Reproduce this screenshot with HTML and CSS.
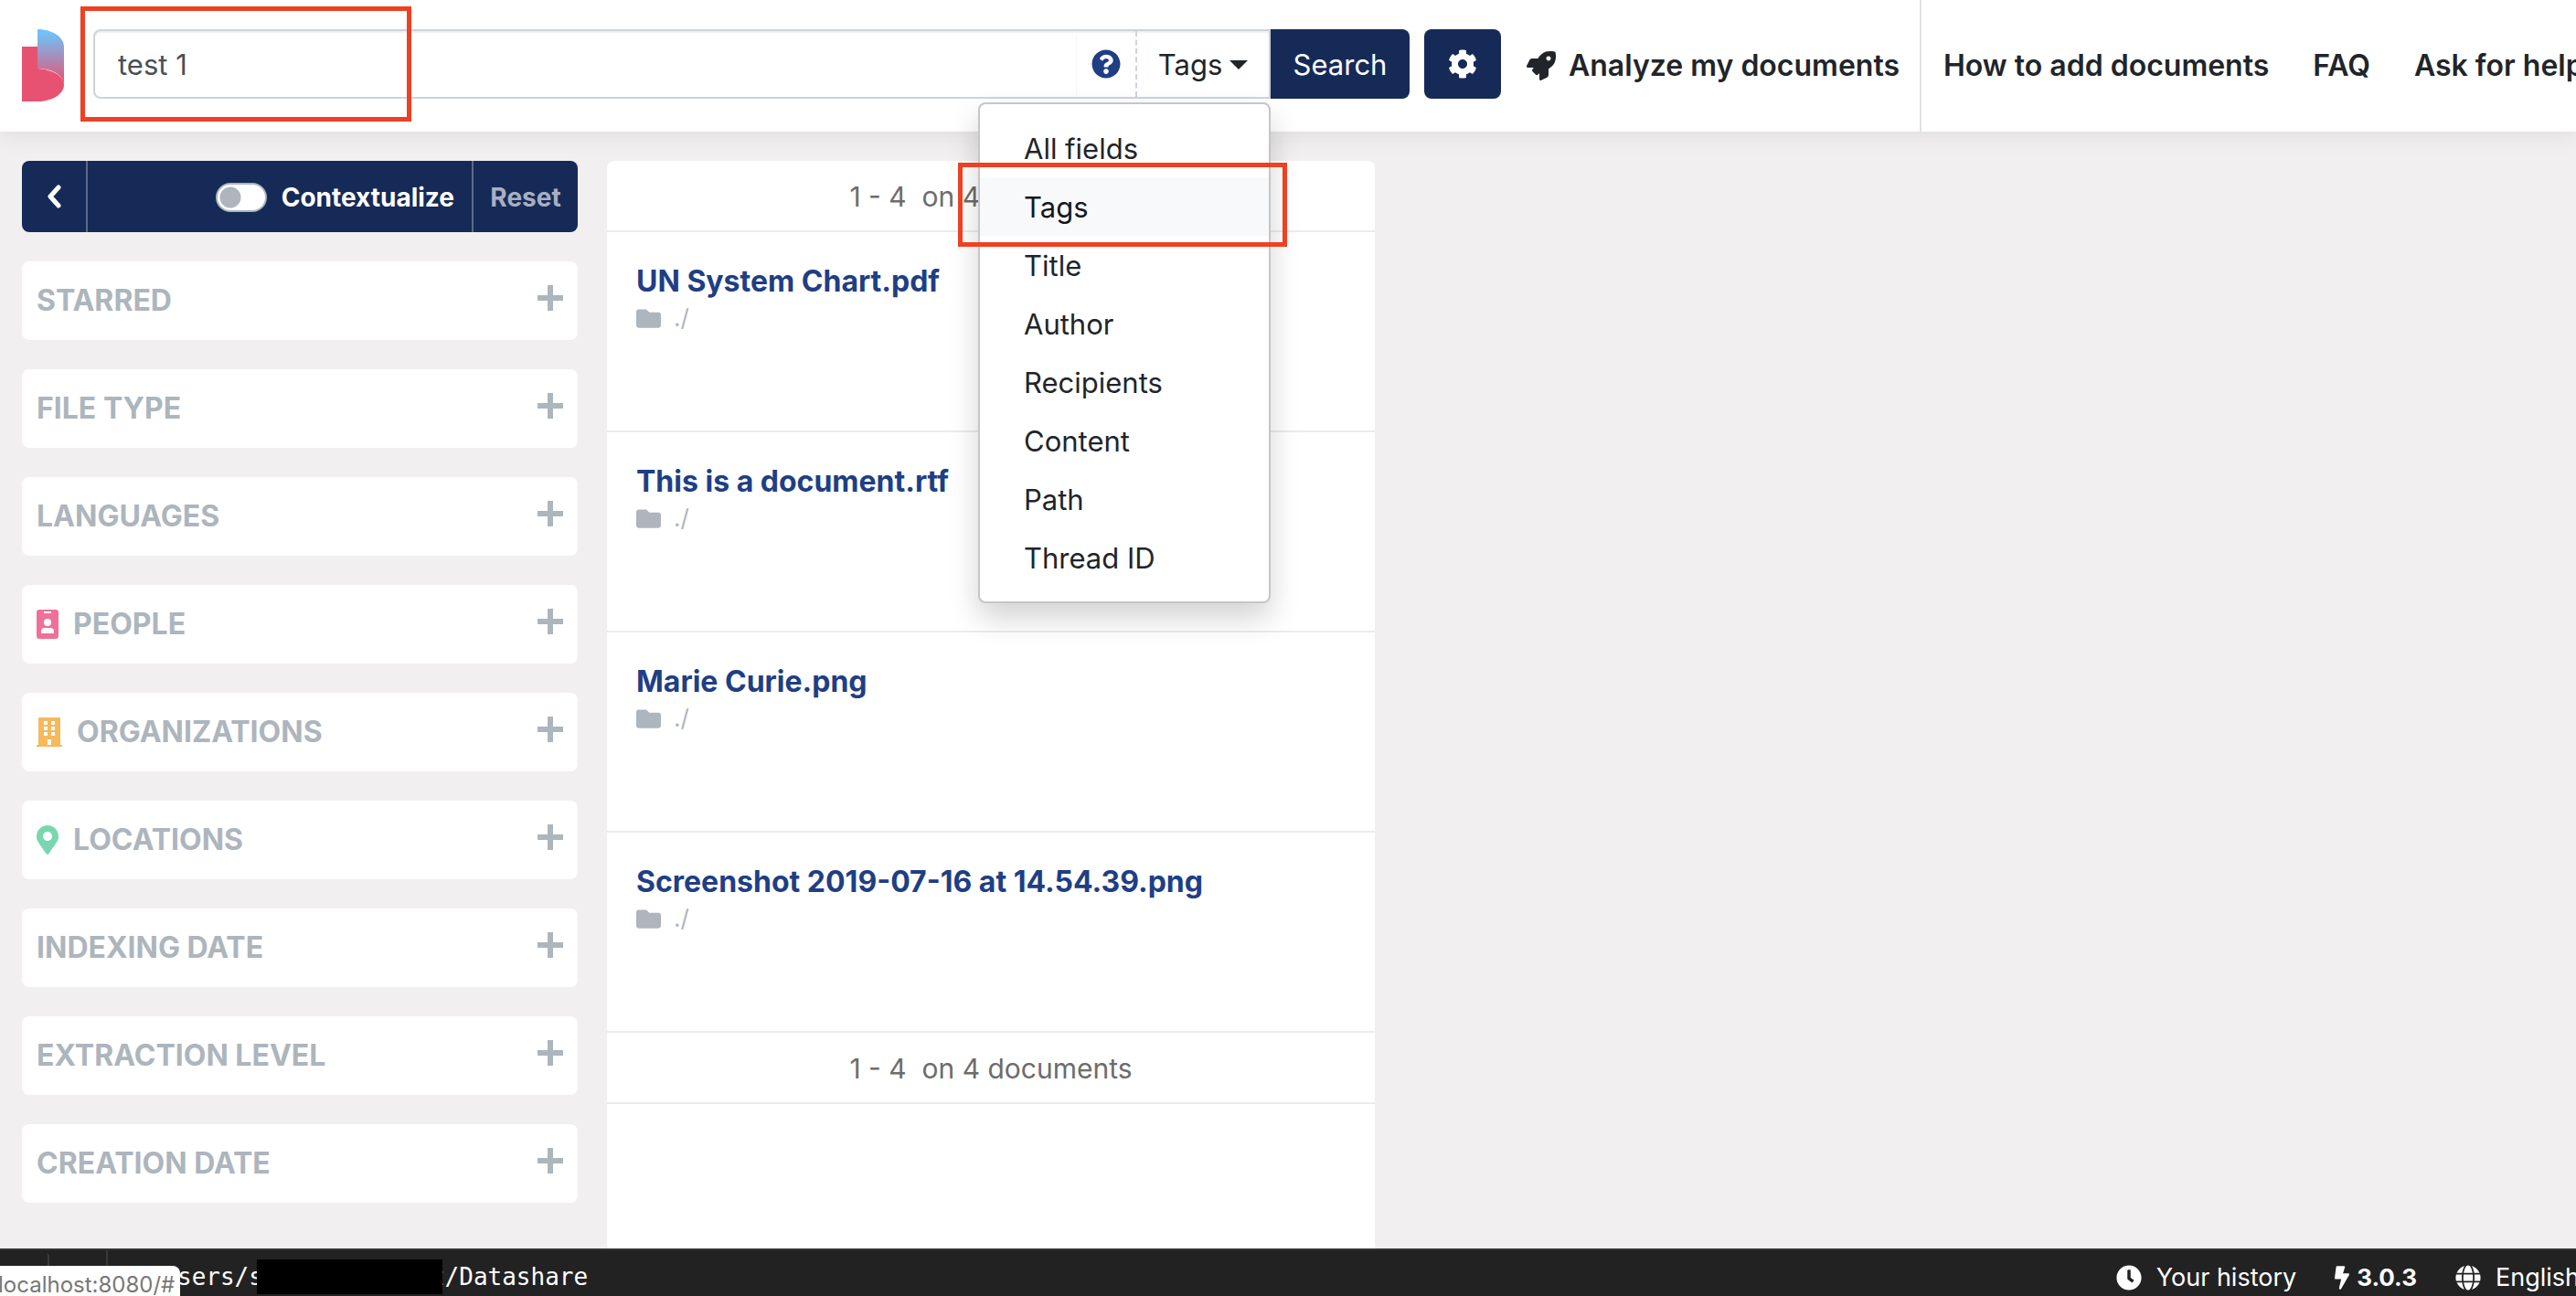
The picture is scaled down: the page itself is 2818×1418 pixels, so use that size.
FILE: index.html
```html
<!DOCTYPE html>
<html lang="en">
<head>
<meta charset="utf-8">
<title>Datashare</title>
<link rel="stylesheet" href="styles.css">
</head>
<body>
<header class="topbar">
  <a class="logo" href="#" aria-label="Datashare home">
    <svg width="46" height="79" viewBox="0 0 46 79">
      <defs><linearGradient id="fade" x1="0" y1="0" x2="0" y2="1"><stop offset="0.05" stop-color="#6cc4fb"/><stop offset="1" stop-color="#e85272"/></linearGradient></defs>
      <path fill="#e85272" d="M0 19H17V43C32 44 46 50 46 61C46 71 33 79 17 79H0Z"/>
      <path fill="url(#fade)" d="M17 0C34 0 46 9 46 19V60C45 50 33 43 17 43Z"/>
    </svg>
  </a>
  <form class="search" role="search">
    <div class="search-box">
      <input class="search-input" type="text" value="test 1" aria-label="Search documents">
      <button class="search-help" type="button" aria-label="Search help"><svg width="32" height="32" viewBox="0 0 512 512" fill="currentColor"><path d="M504 256c0 136.997-111.043 248-248 248S8 392.997 8 256C8 119.083 119.043 8 256 8s248 111.083 248 248zM262.655 90c-54.497 0-89.255 22.957-116.549 63.758-3.536 5.286-2.353 12.415 2.715 16.258l34.699 26.31c5.205 3.947 12.621 3.008 16.665-2.122 17.864-22.658 30.113-35.797 57.303-35.797 20.429 0 45.698 13.148 45.698 32.958 0 14.976-12.363 22.667-32.534 33.976C247.128 238.528 216 254.941 216 296v4c0 6.627 5.373 12 12 12h56c6.627 0 12-5.373 12-12v-1.333c0-28.462 83.186-29.647 83.186-106.667 0-58.002-60.165-102-116.531-102zM256 338c-25.365 0-46 20.635-46 46 0 25.364 20.635 46 46 46s46-20.636 46-46c0-25.365-20.635-46-46-46z"/></svg></button>
      <button class="field-toggle" type="button" aria-haspopup="true" aria-expanded="true">Tags<span class="caret"></span></button>
      <div class="field-menu">
        <a class="field-item" href="#">All fields</a>
        <a class="field-item field-item-active" href="#">Tags<span class="mark mark-item"></span></a>
        <a class="field-item" href="#">Title</a>
        <a class="field-item" href="#">Author</a>
        <a class="field-item" href="#">Recipients</a>
        <a class="field-item" href="#">Content</a>
        <a class="field-item" href="#">Path</a>
        <a class="field-item" href="#">Thread ID</a>
      </div>
    </div>
    <button class="search-submit" type="submit">Search</button>
  </form>
  <button class="settings" type="button" aria-label="Settings"><svg width="32" height="32" viewBox="0 0 512 512" fill="currentColor"><path d="M487.4 315.7l-42.6-24.6c4.3-23.2 4.3-47 0-70.2l42.6-24.6c4.9-2.8 7.1-8.6 5.5-14-11.1-35.6-30-67.8-54.7-94.6-3.8-4.1-10-5.1-14.8-2.3L380.8 110c-17.9-15.4-38.5-27.3-60.8-35.1V25.8c0-5.6-3.9-10.5-9.4-11.7-36.7-8.2-74.3-7.8-109.2 0-5.5 1.2-9.4 6.1-9.4 11.7V75c-22.2 7.9-42.8 19.8-60.8 35.1L88.7 85.5c-4.9-2.8-11-1.9-14.8 2.3-24.7 26.7-43.6 58.9-54.7 94.6-1.7 5.4.6 11.2 5.5 14L67.3 221c-4.3 23.2-4.3 47 0 70.2l-42.6 24.6c-4.9 2.8-7.1 8.6-5.5 14 11.1 35.6 30 67.8 54.7 94.6 3.8 4.1 10 5.1 14.8 2.3l42.6-24.6c17.9 15.4 38.5 27.3 60.8 35.1v49.2c0 5.6 3.9 10.5 9.4 11.7 36.7 8.2 74.3 7.8 109.2 0 5.5-1.2 9.4-6.1 9.4-11.7v-49.2c22.2-7.9 42.8-19.8 60.8-35.1l42.6 24.6c4.9 2.8 11 1.9 14.8-2.3 24.7-26.7 43.6-58.9 54.7-94.6 1.5-5.5-.7-11.3-5.6-14.1zM256 336c-44.1 0-80-35.9-80-80s35.9-80 80-80 80 35.9 80 80-35.9 80-80 80z"/></svg></button>
  <a class="analyze" href="#"><svg width="32" height="32" viewBox="0 0 512 512" fill="currentColor"><path d="M505.12 19.09c-1.19-5.53-6.66-11-12.21-12.19C460.72 0 435.51 0 410.41 0 307.18 0 245.27 55.2 199.05 128H94.84c-16.35 0-35.56 11.88-42.89 26.48L2.52 253.3A28.4 28.4 0 0 0 0 264a24 24 0 0 0 24 24h103.82l-22.48 22.47c-11.36 11.36-13 32.26 0 45.25l50.91 50.9c11.15 11.2 32.15 13.17 45.27 0L224 384.16V488a24 24 0 0 0 24 24 28.56 28.56 0 0 0 10.7-2.52l98.73-49.39c14.63-7.29 26.51-26.5 26.51-42.85V312.8c72.6-46.32 128.04-108.41 128.04-211.1C512.08 76.5 512.08 51.3 505.12 19.09ZM384.04 168A40 40 0 1 1 424.05 128 40.02 40.02 0 0 1 384.04 168Z"/></svg>Analyze my documents</a>
  <nav class="help-links">
    <a href="#">How to add documents</a>
    <a href="#">FAQ</a>
    <a class="clipped" href="#">Ask for help</a>
  </nav>
  <span class="mark mark-query"></span>
</header>

<main class="content">
  <aside class="filters">
    <div class="filters-bar">
      <button class="bar-back" type="button" aria-label="Hide filters"><svg width="16" height="26" viewBox="0 0 16 26" fill="none" stroke="currentColor" stroke-width="5" stroke-linecap="round" stroke-linejoin="round"><path d="M13 3L4 13L13 23"/></svg></button>
      <label class="bar-context" for="ctx"><input class="switch" type="checkbox" id="ctx">Contextualize</label>
      <button class="bar-reset" type="button">Reset</button>
    </div>
    <button class="filter" type="button"><span>STARRED</span><i class="plus"></i></button>
    <button class="filter" type="button"><span>FILE TYPE</span><i class="plus"></i></button>
    <button class="filter" type="button"><span>LANGUAGES</span><i class="plus"></i></button>
    <button class="filter" type="button"><svg width="24" height="32" viewBox="0 0 24 32"><rect width="24" height="32" rx="3" fill="#ef7099"/><g fill="#fff"><rect x="8" y="2" width="8" height="2"/><circle cx="12" cy="14" r="4"/><path d="M5 26v-2a4 4 0 0 1 4-4h6a4 4 0 0 1 4 4v1q0 1-1 1H6q-1 0-1-1z"/></g></svg><span>PEOPLE</span><i class="plus"></i></button>
    <button class="filter" type="button"><svg width="28" height="32" viewBox="0 0 28 32"><path fill="#f6b95b" d="M2 30V1q0-1 1-1H25q1 0 1 1V30h2v2H0V30z"/><path fill="#fff" d="M8 4h4v4H8zM16 4h4v4h-4zM8 10h4v4H8zM16 10h4v4h-4zM8 16h4v4H8zM16 16h4v4h-4zM12 24h4v6h-4z"/></svg><span>ORGANIZATIONS</span><i class="plus"></i></button>
    <button class="filter" type="button"><svg width="24" height="32" viewBox="0 0 384 512"><path fill="#78d7b0" d="M172.268 501.67C26.97 291.031 0 269.413 0 192 0 85.961 85.961 0 192 0s192 85.961 192 192c0 77.413-26.97 99.031-172.268 309.67-9.535 13.774-29.93 13.773-39.464 0zM192 272c44.183 0 80-35.817 80-80s-35.817-80-80-80-80 35.817-80 80 35.817 80 80 80z"/></svg><span>LOCATIONS</span><i class="plus"></i></button>
    <button class="filter" type="button"><span>INDEXING DATE</span><i class="plus"></i></button>
    <button class="filter" type="button"><span>EXTRACTION LEVEL</span><i class="plus"></i></button>
    <button class="filter" type="button"><span>CREATION DATE</span><i class="plus"></i></button>
  </aside>

  <section class="results">
    <div class="count">1 - 4&nbsp; on 4 documents</div>
    <article class="doc"><a class="doc-title" href="#">UN System Chart.pdf</a><div class="doc-path"><svg width="27" height="27" viewBox="0 0 512 512" fill="currentColor"><path d="M464 128H272l-64-64H48C21.49 64 0 85.49 0 112v288c0 26.51 21.49 48 48 48h416c26.51 0 48-21.49 48-48V176c0-26.51-21.49-48-48-48z"/></svg>./</div></article>
    <article class="doc"><a class="doc-title" href="#">This is a document.rtf</a><div class="doc-path"><svg width="27" height="27" viewBox="0 0 512 512" fill="currentColor"><path d="M464 128H272l-64-64H48C21.49 64 0 85.49 0 112v288c0 26.51 21.49 48 48 48h416c26.51 0 48-21.49 48-48V176c0-26.51-21.49-48-48-48z"/></svg>./</div></article>
    <article class="doc"><a class="doc-title" href="#">Marie Curie.png</a><div class="doc-path"><svg width="27" height="27" viewBox="0 0 512 512" fill="currentColor"><path d="M464 128H272l-64-64H48C21.49 64 0 85.49 0 112v288c0 26.51 21.49 48 48 48h416c26.51 0 48-21.49 48-48V176c0-26.51-21.49-48-48-48z"/></svg>./</div></article>
    <article class="doc"><a class="doc-title" href="#">Screenshot 2019-07-16 at 14.54.39.png</a><div class="doc-path"><svg width="27" height="27" viewBox="0 0 512 512" fill="currentColor"><path d="M464 128H272l-64-64H48C21.49 64 0 85.49 0 112v288c0 26.51 21.49 48 48 48h416c26.51 0 48-21.49 48-48V176c0-26.51-21.49-48-48-48z"/></svg>./</div></article>
    <div class="count">1 - 4&nbsp; on 4 documents</div>
  </section>
</main>

<footer class="footer">
  <div class="footer-slot footer-slot-first"></div>
  <div class="footer-slot"></div>
  <div class="data-path"><span>sers/s</span><span class="redacted"></span><span>t/Datashare</span></div>
  <div class="footer-links">
    <a href="#"><svg width="28" height="28" viewBox="0 0 512 512" fill="currentColor"><path d="M256,8C119,8,8,119,8,256S119,504,256,504,504,393,504,256,393,8,256,8Zm92.49,313h0l-20,25a16,16,0,0,1-22.49,2.5h0l-67-49.72a40,40,0,0,1-15-31.23V112a16,16,0,0,1,16-16h32a16,16,0,0,1,16,16V256l58,42.5A16,16,0,0,1,348.49,321Z"/></svg>Your history</a>
    <a class="version" href="#"><svg width="16" height="26" viewBox="0 0 320 512" fill="currentColor"><path d="M296 160H180.6l42.6-129.8C227.2 15 215.7 0 200 0H56C44 0 33.8 8.9 32.2 20.8l-32 240C-1.7 275.2 9.5 288 24 288h118.7L96.6 482.5c-3.6 15.2 8 29.5 23.3 29.5 8.4 0 16.4-4.4 20.8-12l176-304c9.3-15.9-2.2-36-20.7-36z"/></svg>3.0.3</a>
    <a class="language" href="#"><svg width="28" height="28" viewBox="0 0 496 512" fill="currentColor"><path d="M336.5 160C322 70.7 287.8 8 248 8s-74 62.7-88.5 152h177zM152 256c0 22.2 1.2 43.5 3.3 64h185.3c2.1-20.5 3.3-41.8 3.3-64s-1.2-43.5-3.3-64H155.3c-2.1 20.5-3.3 41.8-3.3 64zm324.7-96c-28.6-67.9-86.5-120.4-158-141.6 24.4 33.8 41.2 84.7 50 141.6h108zM177.2 18.4C105.8 39.6 47.8 92.1 19.3 160h108c8.7-56.9 25.5-107.8 49.9-141.6zM487.4 192H372.7c2.1 21 3.3 42.5 3.3 64s-1.2 43-3.3 64h114.6c5.5-20.5 8.6-41.8 8.6-64s-3.1-43.5-8.5-64zM120 256c0-21.5 1.2-43 3.3-64H8.6C3.2 212.5 0 233.8 0 256s3.2 43.5 8.6 64h114.6c-2-21-3.2-42.5-3.2-64zm39.5 96c14.5 89.3 48.7 152 88.5 152s74-62.7 88.5-152h-177zm159.3 141.6c71.4-21.2 129.4-73.7 158-141.6h-108c-8.8 56.9-25.6 107.8-50 141.6zM19.3 352c28.6 67.9 86.5 120.4 158 141.6-24.4-33.8-41.2-84.7-50-141.6h-108z"/></svg>English</a>
  </div>
</footer>
<div class="status">localhost:8080/#</div>
</body>
</html>
```
FILE: styles.css
```css
* { box-sizing: border-box; }

body {
  margin: 0;
  min-height: 100vh;
  display: flex;
  flex-direction: column;
  overflow-x: hidden;
  background: #f1eff0;
  color: #212529;
  font: 400 31px/48px Inter, "Liberation Sans", sans-serif;
}

a { color: inherit; text-decoration: none; }
button, input { font: inherit; color: inherit; margin: 0; padding: 0; border: 0; background: none; }
svg { display: block; flex: none; }

.topbar {
  position: relative;
  z-index: 2;
  display: flex;
  align-items: stretch;
  height: 144px;
  padding-left: 24px;
  background: #fff;
  box-shadow: 0 4px 24px rgba(0, 0, 0, 0.08);
}
.logo { margin: 32px 32px 0 0; }

.search { flex: 1; display: flex; height: 76px; margin-top: 32px; }
.search-box {
  position: relative;
  flex: 1;
  display: flex;
  border: 2px solid #ced4da;
  border-radius: 8px 0 0 8px;
  box-shadow: inset 0 2px 2px rgba(0, 0, 0, 0.07);
}
.search-input { flex: 1; min-width: 0; padding: 2px 0 0 25px; color: #495057; outline: 0; }
.search-help { padding: 0 16px; color: #203e84; border-left: 1px solid #f7f7f7; }
.field-toggle {
  display: flex;
  align-items: center;
  justify-content: center;
  gap: 8px;
  width: 146px;
  padding-top: 2px;
  border-left: 2px dashed #ced4da;
}
.caret { border: 10px solid transparent; border-top-color: currentColor; border-bottom: 0; }
.search-submit { width: 152px; padding-top: 2px; color: #fff; background: #162a57; border-radius: 0 8px 8px 0; }
.settings {
  flex: none;
  display: grid;
  place-items: center;
  width: 84px;
  height: 76px;
  margin: 32px 0 0 16px;
  color: #fff;
  background: #162a57;
  border-radius: 8px;
}

.field-menu {
  position: absolute;
  top: 78px;
  right: -2px;
  width: 320px;
  padding: 16px 0;
  background: #fff;
  border: 2px solid #c6c6c6;
  border-radius: 8px;
  box-shadow: 0 16px 32px rgba(0, 0, 0, 0.175);
}
.field-item { position: relative; display: block; padding: 9px 48px 7px; }
.field-item-active { background: #f8f9fa; color: #16181b; }

/* Red highlight frames */
.mark { position: absolute; z-index: 3; border: 5px solid #ee4023; pointer-events: none; }
.mark-query { left: 88px; top: 7px; width: 362px; height: 126px; }
.mark-item { inset: -16px -20px -12px -24px; }

.analyze, .help-links {
  flex: none;
  display: flex;
  align-items: center;
  font-size: 32px;
  font-weight: 600;
  white-space: nowrap;
}
.analyze { gap: 14px; width: 460px; padding-left: 28px; border-right: 2px solid #dee2e6; }
.help-links { gap: 48px; width: 716px; padding-left: 24px; }
.clipped { flex: 1; min-width: 0; overflow: hidden; }

.content { flex: 1; display: flex; gap: 32px; padding: 32px 0 0 24px; }
.filters { flex: 0 0 608px; display: flex; flex-direction: column; gap: 32px; padding-bottom: 50px; }
.filters-bar {
  display: flex;
  height: 78px;
  color: #fff;
  background: #162a57;
  border-radius: 8px;
  font-size: 28px;
  font-weight: 700;
}
.bar-back { display: grid; place-items: center; width: 72px; border-right: 2px solid #5a698a; }
.bar-context { flex: 1; display: flex; align-items: center; justify-content: flex-end; gap: 16px; padding: 2px 19px 0 0; }
.bar-reset { width: 116px; padding-top: 2px; color: #a8afc2; border-left: 2px solid #5a698a; }
.switch {
  appearance: none;
  width: 56px;
  height: 32px;
  border: 2px solid #adb5bd;
  border-radius: 16px;
  background: radial-gradient(circle at 14px 14px, #adb5bd 11px, #fff 12px);
}
.filter {
  display: flex;
  align-items: center;
  gap: 16px;
  height: 86px;
  padding: 0 16px;
  color: #adb5bd;
  background: #fff;
  border-radius: 8px;
  font-size: 32px;
  font-weight: 700;
}
.plus {
  width: 28px;
  height: 28px;
  margin: 0 0 6px auto;
  border-radius: 2px;
  background:
    linear-gradient(currentColor, currentColor) center / 28px 6px no-repeat,
    linear-gradient(currentColor, currentColor) center / 6px 28px no-repeat;
}

.results { flex: 0 0 840px; background: #fff; border-radius: 8px 8px 0 0; }
.count {
  height: 78px;
  padding-top: 15px;
  text-align: center;
  color: #6c6c6c;
  border-bottom: 2px solid #e9ecef;
  font-size: 30px;
}
.doc { height: 219px; padding: 30px 32px; border-bottom: 2px solid #e9ecef; }
.doc-title { color: #203e84; font-size: 32px; font-weight: 700; }
.doc-path { display: flex; align-items: center; gap: 14px; color: #adb5bd; font-size: 26px; line-height: 32px; }

.footer {
  display: flex;
  height: 52px;
  color: #fff;
  background: #222;
  border-top: 2px solid #333;
  font-size: 27px;
  overflow: hidden;
}
.footer-slot { width: 64px; border-right: 2px solid #3a3a3a; }
.footer-slot-first { width: 54px; margin-top: 3px; border-top-right-radius: 4px; }
.data-path {
  display: flex;
  align-items: center;
  margin-left: 76px;
  padding-top: 8px;
  font: 26px/32px "DejaVu Sans Mono", monospace;
}
.redacted { position: relative; width: 203px; height: 38px; margin: 0 -13px 0 -7px; background: #000; }
.footer-links { display: flex; gap: 42px; margin-left: auto; padding-top: 10px; line-height: 40px; }
.footer-links a { display: flex; align-items: center; gap: 16px; height: 40px; white-space: nowrap; }
.footer-links .version { gap: 8px; font-size: 26px; font-weight: 700; }
.footer-links .language { width: 132px; overflow: hidden; }

/* Browser link preview */
.status {
  position: fixed;
  z-index: 4;
  left: 0;
  bottom: 0;
  width: 197px;
  height: 33px;
  overflow: hidden;
  color: #777;
  background: #fff;
  border-radius: 0 8px 0 0;
  font-size: 24px;
  line-height: 42px;
  text-indent: -2px;
}
```
